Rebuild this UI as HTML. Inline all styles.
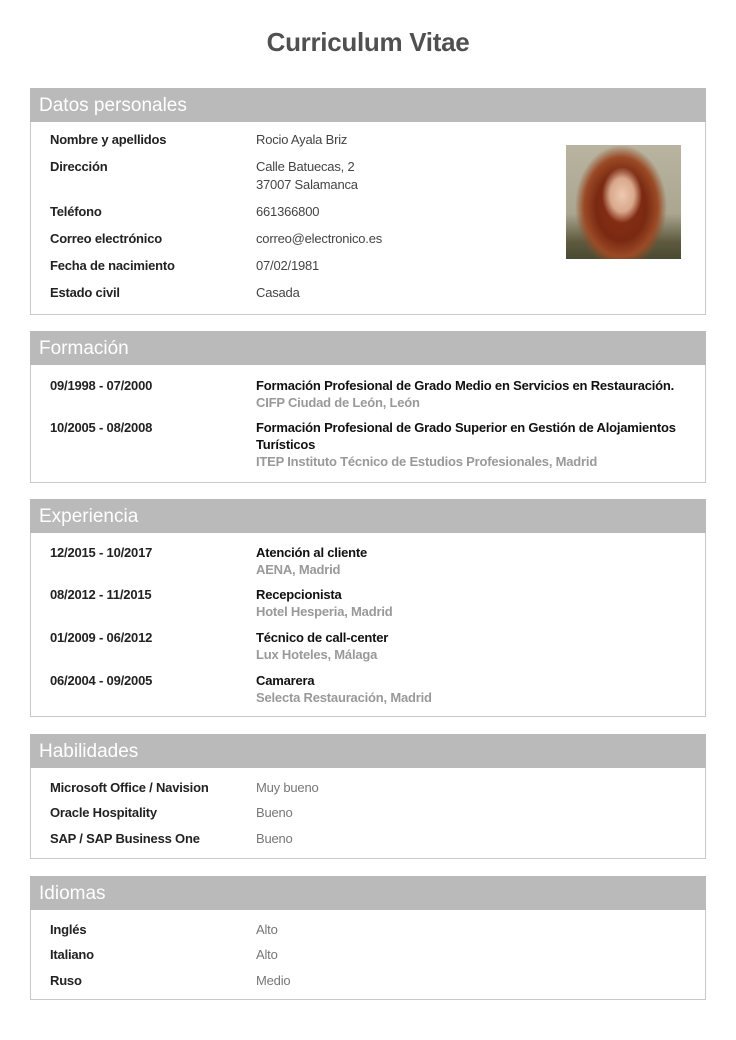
<!DOCTYPE html>
<html><head><meta charset="utf-8"><style>
*{margin:0;padding:0;box-sizing:border-box}
body{width:736px;height:1040px;background:#fff;position:relative;font-family:"Liberation Sans",sans-serif;overflow:hidden}
.t{position:absolute;left:0;width:736px;text-align:center;top:27px;font-size:26px;font-weight:bold;color:#505050;letter-spacing:-0.3px}
.box{position:absolute;left:30px;width:676px;border:1px solid #c8c8c8}
.hd{position:absolute;left:30px;width:676px;height:34px;background:#bababa;color:#fff;font-size:19px;padding-left:9px;line-height:35px}
.r{position:absolute;font-size:13px;line-height:16px;letter-spacing:-0.2px;white-space:nowrap;margin-top:1px}
.l{left:50px;font-weight:bold;color:#222}
.v{left:256px;color:#444}
.b{left:256px;font-weight:bold;color:#111}
.g{left:256px;font-weight:bold;color:#999}
.m{left:256px;color:#777}
.photo{position:absolute;left:566px;top:145px;width:115px;height:114px;overflow:hidden;
background:radial-gradient(ellipse 20px 28px at 56px 50px,#edc9b0 0,#d9a88c 60%,transparent 100%),
radial-gradient(ellipse 46px 62px at 55px 62px,#8a3015 0,#7a2a12 55%,#9a4a25 80%,transparent 100%),
linear-gradient(#b9b4a0,#aaa690 60%,#5d5a3e 85%,#4a4a32)}
</style></head><body>
<div class="t">Curriculum Vitae</div>

<div class="box" style="top:88px;height:227px"></div>
<div class="hd" style="top:88px">Datos personales</div>
<div class="r l" style="top:131px">Nombre y apellidos</div><div class="r v" style="top:131px">Rocio Ayala Briz</div>
<div class="r l" style="top:158px">Dirección</div><div class="r v" style="top:158px">Calle Batuecas, 2</div>
<div class="r v" style="top:176px">37007 Salamanca</div>
<div class="r l" style="top:203px">Teléfono</div><div class="r v" style="top:203px">661366800</div>
<div class="r l" style="top:230px">Correo electrónico</div><div class="r v" style="top:230px">correo@electronico.es</div>
<div class="r l" style="top:257px">Fecha de nacimiento</div><div class="r v" style="top:257px">07/02/1981</div>
<div class="r l" style="top:284px">Estado civil</div><div class="r v" style="top:284px">Casada</div>
<div class="photo"></div>

<div class="box" style="top:331px;height:152px"></div>
<div class="hd" style="top:331px">Formación</div>
<div class="r l" style="top:377px">09/1998 - 07/2000</div><div class="r b" style="top:377px">Formación Profesional de Grado Medio en Servicios en Restauración.</div>
<div class="r g" style="top:394px">CIFP Ciudad de León, León</div>
<div class="r l" style="top:419px">10/2005 - 08/2008</div><div class="r b" style="top:419px">Formación Profesional de Grado Superior en Gestión de Alojamientos</div>
<div class="r b" style="top:436px">Turísticos</div>
<div class="r g" style="top:453px">ITEP Instituto Técnico de Estudios Profesionales, Madrid</div>

<div class="box" style="top:499px;height:218px"></div>
<div class="hd" style="top:499px">Experiencia</div>
<div class="r l" style="top:544px">12/2015 - 10/2017</div><div class="r b" style="top:544px">Atención al cliente</div><div class="r g" style="top:561px">AENA, Madrid</div>
<div class="r l" style="top:586px">08/2012 - 11/2015</div><div class="r b" style="top:586px">Recepcionista</div><div class="r g" style="top:603px">Hotel Hesperia, Madrid</div>
<div class="r l" style="top:629px">01/2009 - 06/2012</div><div class="r b" style="top:629px">Técnico de call-center</div><div class="r g" style="top:646px">Lux Hoteles, Málaga</div>
<div class="r l" style="top:672px">06/2004 - 09/2005</div><div class="r b" style="top:672px">Camarera</div><div class="r g" style="top:689px">Selecta Restauración, Madrid</div>

<div class="box" style="top:734px;height:125px"></div>
<div class="hd" style="top:734px">Habilidades</div>
<div class="r l" style="top:779px">Microsoft Office / Navision</div><div class="r m" style="top:779px">Muy bueno</div>
<div class="r l" style="top:804px">Oracle Hospitality</div><div class="r m" style="top:804px">Bueno</div>
<div class="r l" style="top:830px">SAP / SAP Business One</div><div class="r m" style="top:830px">Bueno</div>

<div class="box" style="top:876px;height:124px"></div>
<div class="hd" style="top:876px">Idiomas</div>
<div class="r l" style="top:921px">Inglés</div><div class="r m" style="top:921px">Alto</div>
<div class="r l" style="top:946px">Italiano</div><div class="r m" style="top:946px">Alto</div>
<div class="r l" style="top:972px">Ruso</div><div class="r m" style="top:972px">Medio</div>
</body></html>
